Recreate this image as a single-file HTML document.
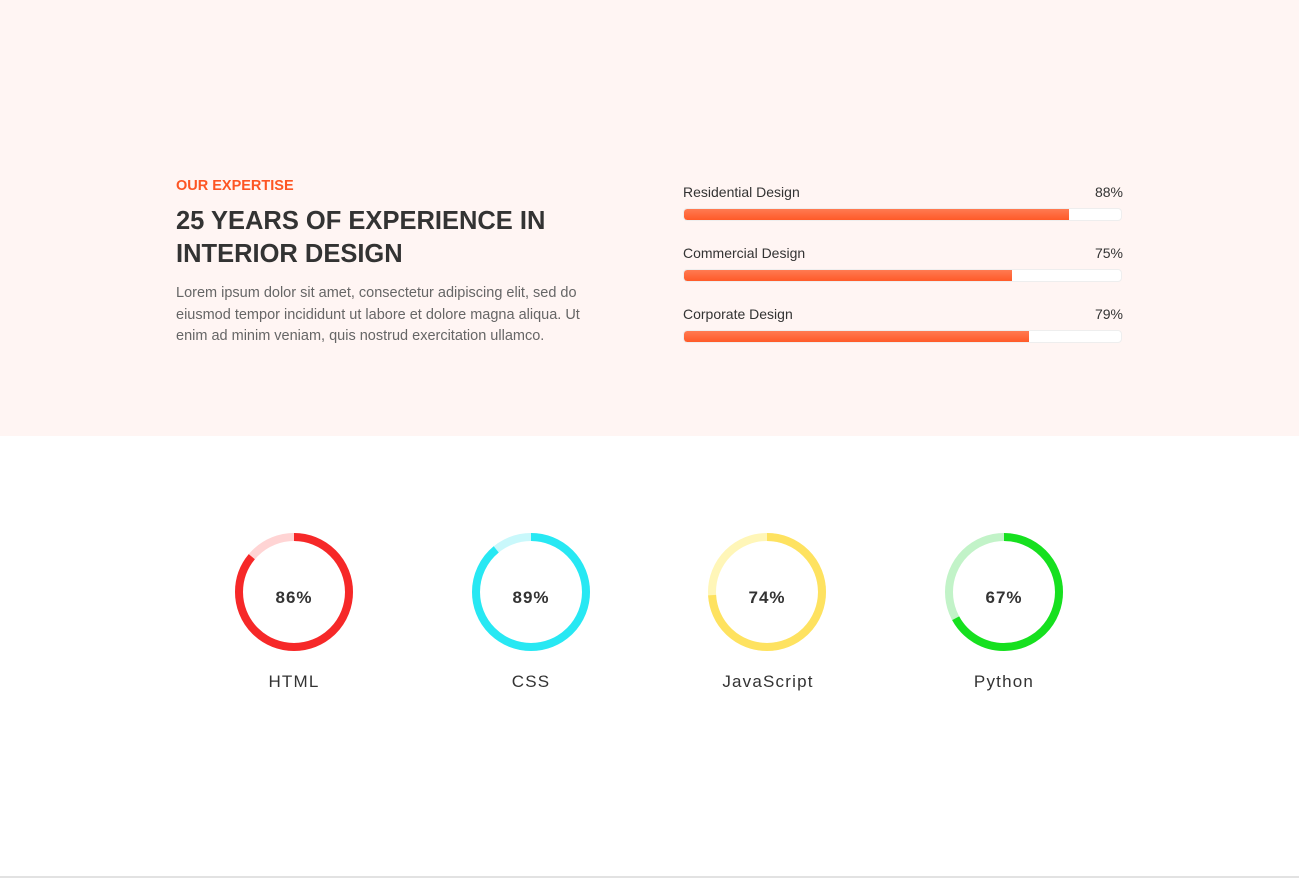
<!DOCTYPE html>
<html><head><style>
html,body{margin:0;padding:0;width:1299px;height:888px;overflow:hidden;background:#fff;font-family:"Liberation Sans",sans-serif}
.top{position:absolute;left:0;top:0;width:1299px;height:436px;background:#fff5f3}
.sub{position:absolute;left:176px;top:178px;color:#fd5523;font-size:14.5px;font-weight:bold}
h2{position:absolute;left:176px;top:205px;margin:0;font-size:25.5px;line-height:33px;color:#333;font-weight:bold;letter-spacing:0}
p{position:absolute;left:176px;top:283px;margin:0;width:430px;font-size:14.5px;line-height:21.5px;color:#666}
.bar{position:absolute;left:683px;width:440px}
.bar .l{font-size:14px;color:#333;height:20px}
.bar .r{position:absolute;right:0;top:0;font-size:14px;color:#333}
.track{position:absolute;top:24px;left:0;width:439px;height:13px;background:#fff;border:1px solid #eee;border-radius:4px;overflow:hidden;box-sizing:border-box}
.fill{height:100%;background:linear-gradient(#ff7a52,#ff5a28);border-radius:3px 0 0 3px}
.line{position:absolute;left:0;top:876px;width:1299px;height:2px;background:#e2e2e2}
.lab{position:absolute;top:672px;width:200px;text-align:center;font-size:17px;color:#333;letter-spacing:1.2px}
</style></head><body>
<div class="top"></div>
<div class="sub">OUR EXPERTISE</div>
<h2>25 YEARS OF EXPERIENCE IN<br>INTERIOR DESIGN</h2>
<p>Lorem ipsum dolor sit amet, consectetur adipiscing elit, sed do eiusmod tempor incididunt ut labore et dolore magna aliqua. Ut enim ad minim veniam, quis nostrud exercitation ullamco.</p>
<div class="bar" style="top:184px"><div class="l">Residential Design</div><div class="r">88%</div><div class="track"><div class="fill" style="width:88%"></div></div></div>
<div class="bar" style="top:245px"><div class="l">Commercial Design</div><div class="r">75%</div><div class="track"><div class="fill" style="width:75%"></div></div></div>
<div class="bar" style="top:306px"><div class="l">Corporate Design</div><div class="r">79%</div><div class="track"><div class="fill" style="width:79%"></div></div></div>
<svg style="position:absolute;left:0;top:0" width="1299" height="888">
<g fill="none" stroke-width="8">
<circle cx="294" cy="592" r="55" stroke="#ffd4d4"/>
<circle cx="294" cy="592" r="55" stroke="#f62828" stroke-dasharray="297.2 400" transform="rotate(-90 294 592)"/>
<circle cx="531" cy="592" r="55" stroke="#c9f8fb"/>
<circle cx="531" cy="592" r="55" stroke="#27e8f3" stroke-dasharray="307.6 400" transform="rotate(-90 531 592)"/>
<circle cx="767" cy="592" r="55" stroke="#fff6b8"/>
<circle cx="767" cy="592" r="55" stroke="#fee260" stroke-dasharray="255.7 400" transform="rotate(-90 767 592)"/>
<circle cx="1004" cy="592" r="55" stroke="#c2f3c8"/>
<circle cx="1004" cy="592" r="55" stroke="#16e01f" stroke-dasharray="231.6 400" transform="rotate(-90 1004 592)"/>
</g>
<g font-family="Liberation Sans, sans-serif" font-size="17" font-weight="bold" fill="#333" text-anchor="middle" letter-spacing="1">
<text x="294" y="603">86%</text><text x="531" y="603">89%</text><text x="767" y="603">74%</text><text x="1004" y="603">67%</text>
</g>
</svg>
<div class="lab" style="left:194px">HTML</div>
<div class="lab" style="left:431px">CSS</div>
<div class="lab" style="left:668px">JavaScript</div>
<div class="lab" style="left:904px">Python</div>
<div class="line"></div>
</body></html>
